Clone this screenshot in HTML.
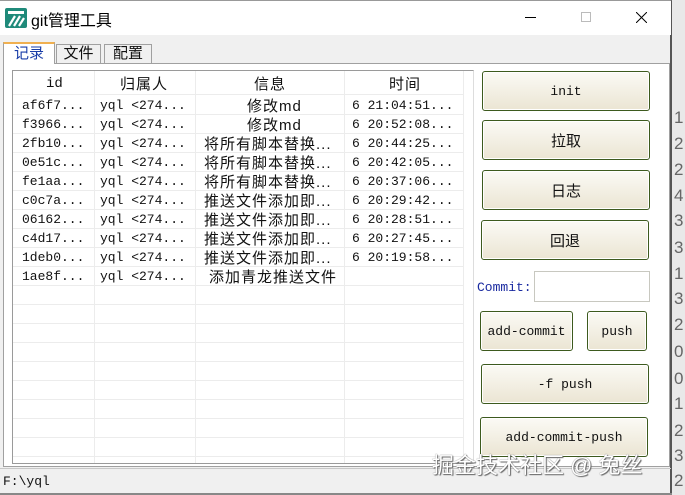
<!DOCTYPE html>
<html><head><meta charset="utf-8"><style>
*{margin:0;padding:0;box-sizing:border-box}
body{width:685px;height:495px;overflow:hidden;background:#e9e9e9;position:relative;font-family:"Liberation Mono","Noto Sans CJK SC",monospace;font-size:13px;color:#111}
.a{position:absolute}
.cn{font-family:"Liberation Sans","Noto Sans CJK SC",sans-serif}
.btn{position:absolute;border:1px solid #3d5a1e;border-radius:3px;background:linear-gradient(#fbfaf5,#ebe5d3);display:flex;align-items:center;justify-content:center;font-size:13px;color:#111;box-shadow:inset 0 0 0 1px #fff}
.btn.cn{font-size:15px}
.row{position:absolute;left:13px;width:450px;height:19px;border-bottom:1px solid #ececec}
.row span{position:absolute;top:2px;white-space:nowrap}
.row span.cn{font-size:15px;letter-spacing:1px;top:-1px}
.num{position:absolute;left:674px;font-family:"Liberation Sans",sans-serif;font-size:17px;color:#666}
</style></head><body>
<div class="a" style="left:0;top:0;width:672px;height:495px;background:#f0f0f0;border-right:2px solid #555;border-top:1px solid #999"></div>
<div class="a" style="left:0;top:1px;width:671px;height:34px;background:#fff"></div>
<svg class="a" style="left:5px;top:8px" width="22" height="20" viewBox="0 0 22 20"><rect x="0" y="0" width="22" height="20" rx="2" fill="#1f8a7a"/><rect x="3" y="3" width="16" height="3" fill="#fff"/><path d="M4 18 L10 8 M9 18 L15 8 M14 18 L19 10" stroke="#fff" stroke-width="2.2"/></svg>
<div class="a cn" style="left:31px;top:7px;font-size:16px;color:#000">git管理工具</div>
<div class="a" style="left:525px;top:17px;width:11px;height:1px;background:#000"></div>
<div class="a" style="left:581px;top:12px;width:10px;height:10px;border:1px solid #bbb"></div>
<svg class="a" style="left:636px;top:12px" width="11" height="11"><path d="M0 0L11 11M11 0L0 11" stroke="#000" stroke-width="1"/></svg>

<div class="a" style="left:3px;top:63px;width:667px;height:404px;border:1px solid #a0a0a0;background:#fff"></div>
<div class="a cn" style="left:3px;top:42px;width:52px;height:22px;background:#fff;border:1px solid #a0a0a0;border-top:2px solid #f0b050;border-bottom:none;color:#1a3ea8;text-align:center;font-size:15px;line-height:20px">记录</div>
<div class="a cn" style="left:56px;top:44px;width:45px;height:20px;background:#f0f0f0;border:1px solid #a0a0a0;text-align:center;font-size:15px;line-height:18px">文件</div>
<div class="a cn" style="left:104px;top:44px;width:48px;height:20px;background:#f0f0f0;border:1px solid #a0a0a0;text-align:center;font-size:15px;line-height:18px">配置</div>

<div class="a" style="left:12px;top:70px;width:462px;height:394px;border:1px solid #9a9a9a;border-right:1px solid #ddd;background:#fff;overflow:hidden">
 <div class="a" style="left:81px;top:0;width:1px;height:394px;background:#ececec"></div>
 <div class="a" style="left:182px;top:0;width:1px;height:394px;background:#ececec"></div>
 <div class="a" style="left:331px;top:0;width:1px;height:394px;background:#ececec"></div>
 <div class="a" style="left:450px;top:0;width:1px;height:394px;background:#ececec"></div>
</div>
<div class="a" style="left:13px;top:71px;width:450px;height:24px;border-bottom:1px solid #ececec"></div>
<div class="a" style="left:46px;top:76px;font-size:14px">id</div>
<div class="a cn" style="left:120px;top:73px;font-size:15px;letter-spacing:1px">归属人</div>
<div class="a cn" style="left:254px;top:73px;font-size:15px;letter-spacing:1px">信息</div>
<div class="a cn" style="left:389px;top:73px;font-size:15px;letter-spacing:1px">时间</div>

<div style="position:absolute;left:0;top:96px">
<div class="row" style="top:0"><span style="left:9px">af6f7...</span><span style="left:87px">yql &lt;274...</span><span class="cn" style="left:234px">修改md</span><span style="left:339px">6 21:04:51...</span></div>
<div class="row" style="top:19px"><span style="left:9px">f3966...</span><span style="left:87px">yql &lt;274...</span><span class="cn" style="left:234px">修改md</span><span style="left:339px">6 20:52:08...</span></div>
<div class="row" style="top:38px"><span style="left:9px">2fb10...</span><span style="left:87px">yql &lt;274...</span><span class="cn" style="left:191px">将所有脚本替换...</span><span style="left:339px">6 20:44:25...</span></div>
<div class="row" style="top:57px"><span style="left:9px">0e51c...</span><span style="left:87px">yql &lt;274...</span><span class="cn" style="left:191px">将所有脚本替换...</span><span style="left:339px">6 20:42:05...</span></div>
<div class="row" style="top:76px"><span style="left:9px">fe1aa...</span><span style="left:87px">yql &lt;274...</span><span class="cn" style="left:191px">将所有脚本替换...</span><span style="left:339px">6 20:37:06...</span></div>
<div class="row" style="top:95px"><span style="left:9px">c0c7a...</span><span style="left:87px">yql &lt;274...</span><span class="cn" style="left:191px">推送文件添加即...</span><span style="left:339px">6 20:29:42...</span></div>
<div class="row" style="top:114px"><span style="left:9px">06162...</span><span style="left:87px">yql &lt;274...</span><span class="cn" style="left:191px">推送文件添加即...</span><span style="left:339px">6 20:28:51...</span></div>
<div class="row" style="top:133px"><span style="left:9px">c4d17...</span><span style="left:87px">yql &lt;274...</span><span class="cn" style="left:191px">推送文件添加即...</span><span style="left:339px">6 20:27:45...</span></div>
<div class="row" style="top:152px"><span style="left:9px">1deb0...</span><span style="left:87px">yql &lt;274...</span><span class="cn" style="left:191px">推送文件添加即...</span><span style="left:339px">6 20:19:58...</span></div>
<div class="row" style="top:171px"><span style="left:9px">1ae8f...</span><span style="left:87px">yql &lt;274...</span><span class="cn" style="left:196px">添加青龙推送文件</span></div>
<div class="row" style="top:190px"></div><div class="row" style="top:209px"></div><div class="row" style="top:228px"></div><div class="row" style="top:247px"></div><div class="row" style="top:266px"></div><div class="row" style="top:285px"></div><div class="row" style="top:304px"></div><div class="row" style="top:323px"></div><div class="row" style="top:342px"></div>
</div>

<div class="btn" style="left:482px;top:71px;width:168px;height:40px">init</div>
<div class="btn cn" style="left:482px;top:120px;width:168px;height:40px">拉取</div>
<div class="btn cn" style="left:482px;top:170px;width:168px;height:40px">日志</div>
<div class="btn cn" style="left:481px;top:220px;width:168px;height:40px">回退</div>
<div class="a" style="left:477px;top:280px;color:#1a2aa0;font-size:13px">Commit:</div>
<div class="a" style="left:534px;top:271px;width:116px;height:31px;border:1px solid #c8c8c0;background:#fff"></div>
<div class="btn" style="left:480px;top:311px;width:93px;height:40px">add-commit</div>
<div class="btn" style="left:587px;top:311px;width:60px;height:40px">push</div>
<div class="btn" style="left:481px;top:364px;width:168px;height:40px">-f push</div>
<div class="btn" style="left:480px;top:417px;width:168px;height:40px">add-commit-push</div>

<div class="a" style="left:0;top:468px;width:671px;height:1px;background:#c8c8c8"></div>
<div class="a" style="left:3px;top:474px;font-size:13px">F:\yql</div>
<div class="a" style="left:0;top:493px;width:672px;height:2px;background:#888"></div>

<div class="a cn" style="left:432px;top:448px;font-size:22px;color:#fff;text-shadow:0 0 1px #555,1px 1px 1px #666">掘金技术社区 @ 兔丝</div>

<div class="num" style="top:108px">1</div><div class="num" style="top:134px">2</div><div class="num" style="top:160px">2</div><div class="num" style="top:186px">4</div><div class="num" style="top:211px">3</div><div class="num" style="top:238px">3</div><div class="num" style="top:264px">1</div><div class="num" style="top:289px">3</div><div class="num" style="top:315px">2</div><div class="num" style="top:342px">0</div><div class="num" style="top:369px">0</div><div class="num" style="top:394px">1</div><div class="num" style="top:421px">2</div><div class="num" style="top:446px">3</div><div class="num" style="top:471px">2</div>
</body></html>
